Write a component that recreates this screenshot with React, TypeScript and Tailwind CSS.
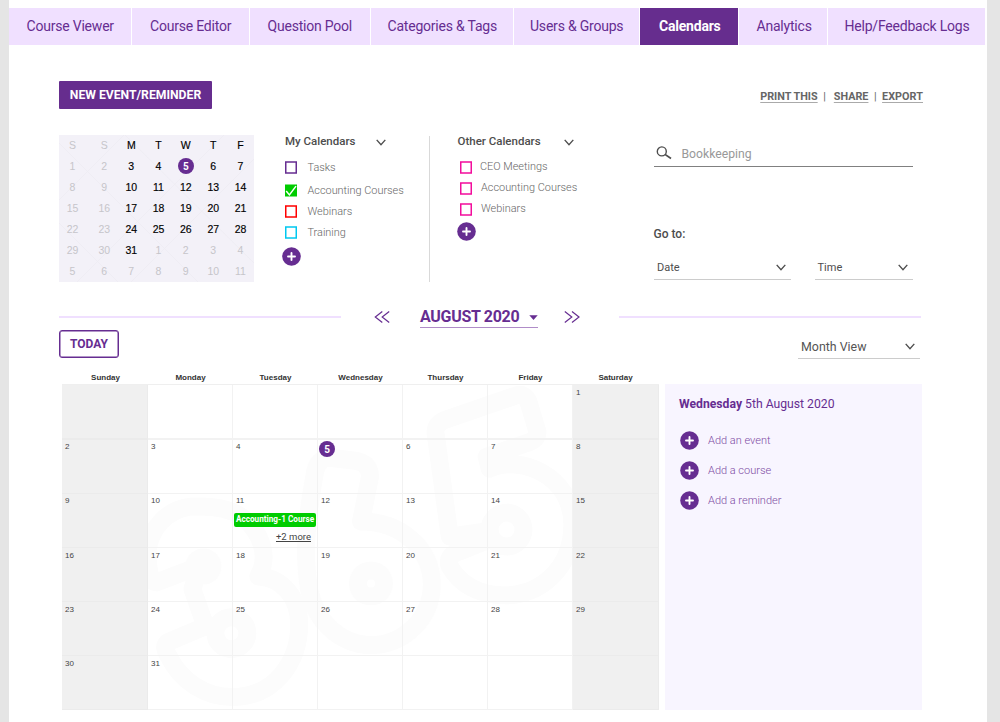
import React from "react";

const tabs = [
  { label: "Course Viewer", box: "w-[122px] pl-[17.5px]" },
  { label: "Course Editor", box: "w-[117px] pl-[18px]" },
  { label: "Question Pool", box: "w-[119.5px] pl-[17.5px]" },
  { label: "Categories & Tags", box: "w-[142px] pl-[17px]" },
  { label: "Users & Groups", box: "w-[125px] pl-[16.5px]" },
  { label: "Calendars", box: "w-[98.5px] pl-[19.5px]", active: true },
  { label: "Analytics", box: "w-[88px] pl-[17.5px]" },
  { label: "Help/Feedback Logs", box: "w-[157px] pl-[16.5px]" },
];

const miniRows = [
  ["S", "S", "M", "T", "W", "T", "F"],
  ["1", "2", "3", "4", "5", "6", "7"],
  ["8", "9", "10", "11", "12", "13", "14"],
  ["15", "16", "17", "18", "19", "20", "21"],
  ["22", "23", "24", "25", "26", "27", "28"],
  ["29", "30", "31", "1", "2", "3", "4"],
  ["5", "6", "7", "8", "9", "10", "11"],
];

const weekdays = ["Sunday", "Monday", "Tuesday", "Wednesday", "Thursday", "Friday", "Saturday"];

function Chevron({ className = "" }: { className?: string }) {
  return (
    <svg className={`h-[7px] w-[10px] shrink-0 ${className}`} viewBox="0 0 10 7" fill="none" stroke="#4d4d4d" strokeWidth="1.4">
      <path d="M0.7 0.9 L5 5.6 L9.3 0.9" />
    </svg>
  );
}

function Plus() {
  return (
    <svg className="size-[19px] shrink-0" viewBox="0 0 19 19">
      <circle cx="9.5" cy="9.5" r="9.3" fill="#662d91" />
      <path d="M9.5 6 V13 M6 9.5 H13" stroke="#fff" strokeWidth="1.9" strokeLinecap="round" />
    </svg>
  );
}

function Check({ color = "#00cc00", checked, className = "" }: { color?: string; checked?: boolean; className?: string }) {
  return (
    <svg className={`h-[13px] w-3 shrink-0 ${className}`} viewBox="0 0 12 13" fill="none">
      {checked ? (
        <>
          <rect y="0.5" width="12" height="12" fill={color} />
          <path d="M1.2 7.1 L4.4 10.9 L11 2.1" stroke="#fff" strokeWidth="1.5" />
        </>
      ) : (
        <rect x="0.75" y="1" width="10.5" height="11" stroke={color} strokeWidth="1.5" />
      )}
    </svg>
  );
}

function MiniCalendar() {
  return (
    <div className="relative h-[147px] w-[195px] bg-[#f3f1f8]">
      <svg className="absolute inset-0 h-full w-full" viewBox="0 0 195 147" fill="none" stroke="#eeecf3" strokeWidth="0.8">
        <path d="M0 65 L65 0 M0 8 L42 50 L139 147 M18 147 L165 0 M66 0 L195 128 M72 147 L195 24 M0 88 L59 147" />
      </svg>
      <div className="relative grid grid-cols-[32px_26.5px_27.5px_27px_27.5px_27.5px_27px] grid-rows-[repeat(7,21px)] font-['Liberation_Sans',sans-serif] text-[10.5px]">
        {miniRows.map((row, r) =>
          row.map((d, c) => {
            const muted = c < 2 || r === 6 || (r === 5 && c > 2);
            return (
              <div key={`${r}-${c}`} className={`flex items-center justify-center ${c === 0 ? "pr-[5px]" : ""} ${muted ? "text-[#c6c5ca]" : "text-black [-webkit-text-stroke:0.15px_black]"}`}>
                {r === 1 && c === 4 ? (
                  <span className="mb-px flex size-4 items-center justify-center rounded-full bg-[#662d91] font-['Roboto',sans-serif] text-[10px] font-bold text-white [-webkit-text-stroke:0px]">5</span>
                ) : (
                  d
                )}
              </div>
            );
          })
        )}
      </div>
    </div>
  );
}

function Watermark() {
  return (
    <svg className="absolute inset-0 h-full w-full" viewBox="62 384 597 327" fill="none" stroke="#fcfcfc" strokeWidth="18" strokeLinejoin="round" strokeLinecap="round">
      <path d="M156 583 L198 567 L192 590 L205 627 L167 643 Q162 648 168 657 C180 682 205 698 232 698 C275 698 299 662 299 625 C299 600 283 578 258 577 C268 560 263 540 250 525 C235 508 212 506 190 507 C165 510 150 530 147 550 C147 565 148 583 156 583" />
      <circle cx="203" cy="567" r="9" />
      <circle cx="231" cy="634" r="16" />
      <path d="M361 522 L370 477 Q370 463 355 461 L330 458 Q318 458 315 472 C308 510 302 550 309 590 C315 622 340 645 370 646 C405 646 432 618 432 585 C432 550 402 522 361 522" />
      <circle cx="371" cy="584" r="13" />
      <path d="M485 532 L450 537 L436 435 Q434 425 445 420 L515 396 Q525 392 529 402 L538 432 Q538 440 528 443 L487 457 L490 469 C520 455 573 475 573 525 C573 570 540 596 505 596 C480 596 460 585 450 567 Q446 556 460 552 L490 540" />
      <circle cx="507" cy="530" r="17" />
    </svg>
  );
}

function MonthGrid() {
  return (
    <div className="relative h-[326px] w-[597px]">
      <Watermark />
      <div className="relative grid h-full grid-cols-[86px_repeat(5,85px)_86px] grid-rows-[55px_repeat(5,54px)] border-t border-[#efefef]">
        {Array.from({ length: 42 }, (_, i) => {
          const day = i - 5;
          const weekend = i % 7 === 0 || i % 7 === 6;
          return (
            <div
              key={i}
              className={`relative min-w-0 border-r font-['Liberation_Sans',sans-serif] text-[8px] leading-[9px] text-[#444] ${i < 7 ? "border-b-2" : "border-b"} ${weekend ? "border-[#ebebeb] bg-[#f0f0f0]" : "border-[#f2f2f2]"}`}
            >
              {day === 5 ? (
                <span className="ml-px mt-px flex size-4 items-center justify-center rounded-full bg-[#662d91] font-['Roboto',sans-serif] text-[10px] font-bold text-white">5</span>
              ) : day > 0 && day < 32 ? (
                <span className={`block pl-[3px] ${day > 1 && day < 16 ? "pt-[2px]" : "pt-[3px]"}`}>{day}</span>
              ) : null}
              {day === 11 && (
                <div className="font-['Roboto',sans-serif]">
                  <div className="ml-px mt-[7.5px] flex h-[14px] w-[82px] items-center justify-center whitespace-nowrap rounded-[2px] bg-[#00cc00] text-[8.2px] font-bold text-white">Accounting-1 Course</div>
                  <div className="mt-[4px] pr-[6px] text-right text-[9.5px] leading-[12px] underline underline-offset-1">+2 more</div>
                </div>
              )}
            </div>
          );
        })}
      </div>
    </div>
  );
}

export default function App() {
  return (
    <div className="h-[722px] w-[1000px] overflow-hidden bg-[#e5e5e5] pl-[9px] pr-[13px] font-['Roboto',sans-serif]">
      <div className="h-full bg-white pt-2">
        <nav className="flex h-[37px] w-[977px]">
          {tabs.map((t) => (
            <a
              key={t.label}
              className={`mr-px flex shrink-0 items-center whitespace-nowrap text-[14px] tracking-[-0.21px] last:mr-0 ${t.box} ${t.active ? "bg-[#662d8e] font-bold text-white" : "bg-[#f0e0ff] text-[#662d91]"}`}
            >
              {t.label}
            </a>
          ))}
        </nav>

        <main className="ml-[50px] w-[864px]">
          <div className="flex h-[90px] items-start justify-between pt-[36px]">
            <button className="flex h-7 w-[153px] items-center justify-center rounded-[1px] bg-[#662d8e] text-[12.2px] font-bold text-white">NEW EVENT/REMINDER</button>
            <div className="mt-[9px] flex items-center text-[10.8px] font-bold leading-[13px] text-[#666]">
              <span className="underline decoration-[#aaa] underline-offset-2">PRINT THIS</span>
              <span className="ml-[5.5px] mr-[8px] font-normal">|</span>
              <span className="underline decoration-[#aaa] underline-offset-2">SHARE</span>
              <span className="mx-[5.5px] font-normal">|</span>
              <span className="tracking-[0.05px] underline decoration-[#aaa] underline-offset-2">EXPORT</span>
            </div>
          </div>

          <section className="flex h-[147px]">
            <MiniCalendar />

            <div className="ml-[31px] w-[144px] text-[10.9px] font-light text-[#666]">
              <div className="flex h-[14px] items-center text-[11.5px] font-medium text-[#4d4d4d]">
                My Calendars
                <Chevron className="ml-auto mr-[43px]" />
              </div>
              <div className="mt-[11px] flex h-[14px] items-center gap-[10.5px]"><Check color="#662d91" /><span className="pt-[2px]">Tasks</span></div>
              <div className="mt-[9px] flex h-[14px] items-center gap-[10.5px] whitespace-nowrap"><Check checked className="mt-px" /><span className="pt-[2px]">Accounting Courses</span></div>
              <div className="mt-[7px] flex h-[14px] items-center gap-[10.5px]"><Check color="#ff0000" /><span className="pt-[2px]">Webinars</span></div>
              <div className="mt-[7px] flex h-[14px] items-center gap-[10.5px]"><Check color="#00c8f0" /><span className="pt-[2px]">Training</span></div>
              <div className="-ml-[3.5px] mt-[8px]"><Plus /></div>
            </div>
            <div className="mt-px h-[146px] w-px bg-[#d9d9d9]" />

            <div className="ml-[27.5px] w-[164px] text-[10.9px] font-light text-[#666]">
              <div className="flex h-[14px] items-center text-[11.5px] font-medium text-[#4d4d4d]">
                Other Calendars
                <Chevron className="ml-auto mr-[48px]" />
              </div>
              <div className="ml-[2.5px] mt-[11px] flex h-[14px] items-center gap-[8px]"><Check color="#f20d9c" />CEO Meetings</div>
              <div className="ml-[2.5px] mt-[7px] flex h-[14px] items-center gap-[9px]"><Check color="#f20d9c" />Accounting Courses</div>
              <div className="ml-[2.5px] mt-[7px] flex h-[14px] items-center gap-[9px]"><Check color="#f20d9c" />Webinars</div>
              <div className="-ml-[1px] mt-[6px]"><Plus /></div>
            </div>

            <div className="ml-[32px] w-[259px] text-[#4d4d4d]">
              <div className="flex h-8 items-start border-b border-[#808080] pl-[2.5px] pt-[10px]">
                <svg className="size-[16px]" viewBox="0 0 16 16" fill="none" stroke="#4d4d4d">
                  <circle cx="5.8" cy="6.4" r="4.5" strokeWidth="1.4" />
                  <path d="M9 9.4 L15 13.5" strokeWidth="1.7" />
                </svg>
                <span className="ml-[9.5px] mt-[1px] text-[12.2px] leading-[16px] text-[#999]">Bookkeeping</span>
              </div>
              <div className="mt-[60px] text-[12px] font-medium leading-[14px]">Go to:</div>
              <div className="mt-[15px] flex justify-between text-[11px]">
                <div className="flex h-6 w-[137px] items-center border-b border-[#ccc] pl-[3.5px] pr-[5px]"><span className="pt-[2px]">Date</span><Chevron className="ml-auto" /></div>
                <div className="flex h-6 w-[98px] items-center border-b border-[#ccc] pl-[3px] pr-[5px]"><span className="pt-[2px]">Time</span><Chevron className="ml-auto" /></div>
              </div>
            </div>
          </section>

          <section className="flex h-[48px] items-start pt-[23px] text-[#662d91]">
            <div className="mt-[10.5px] h-[2px] w-[282px] bg-[#f0e0ff]" />
            <svg className="ml-[33px] mt-[6px] h-[12px] w-4" viewBox="0 0 16 12" fill="none" stroke="#662d91" strokeWidth="1.2">
              <path d="M8.3 0.5 L1.3 6 L8.3 11.5 M15.2 0.5 L8.2 6 L15.2 11.5" />
            </svg>
            <div className="ml-[30px] flex h-[23px] w-[118px] items-center whitespace-nowrap border-b border-[#b08cc8] pt-[2px] text-[16px] font-bold tracking-[-0.3px]">
              AUGUST 2020
              <svg className="ml-auto h-[5px] w-[9px]" viewBox="0 0 9 5"><path d="M0.3 0.2 H8.7 L4.5 4.9 Z" fill="#662d91" /></svg>
            </div>
            <svg className="ml-[26px] mt-[6px] h-[12px] w-4" viewBox="0 0 16 12" fill="none" stroke="#662d91" strokeWidth="1.2">
              <path d="M0.8 0.5 L7.8 6 L0.8 11.5 M8 0.5 L15 6 L8 11.5" />
            </svg>
            <div className="ml-[39px] mt-[10.5px] h-[2px] w-[302px] bg-[#f0e0ff]" />
          </section>

          <div className="flex h-[41px] items-start justify-between pr-[3px]">
            <button className="flex h-7 w-[60px] items-center justify-center rounded-[3px] border border-[#662d91] text-[12px] font-bold text-[#662d91] shadow-[inset_0_0_0_0.5px_#662d91]">TODAY</button>
            <div className="mt-[5px] flex h-[24px] w-[122px] items-center border-b border-[#ccc] pl-[3px] pr-[5px] text-[12.4px] text-[#555]"><span className="pt-[2px]">Month View</span><Chevron className="ml-auto" /></div>
          </div>

          <div className="ml-[4px] grid h-[13px] w-[595px] grid-cols-7 items-center text-center font-['Liberation_Sans',sans-serif] text-[8px] font-bold text-[#333]">
            {weekdays.map((d) => <span key={d}>{d}</span>)}
          </div>

          <div className="flex pl-[3px]">
            <MonthGrid />
            <aside className="ml-[6px] h-[326px] w-[257px] bg-[#f8f5ff] pl-[14px] pt-[12px] text-[#662d91]">
              <h2 className="text-[12.2px] leading-[16px]"><b>Wednesday</b> 5th August 2020</h2>
              <div className="ml-[1px] mt-[18.5px] flex flex-col gap-[11px] text-[11px] font-light text-[#7d4aa3]">
                {["Add an event", "Add a course", "Add a reminder"].map((label) => (
                  <div key={label} className="flex h-[19px] items-center gap-[9px]"><Plus /><span className="pt-[2px]">{label}</span></div>
                ))}
              </div>
            </aside>
          </div>
        </main>
      </div>
    </div>
  );
}
